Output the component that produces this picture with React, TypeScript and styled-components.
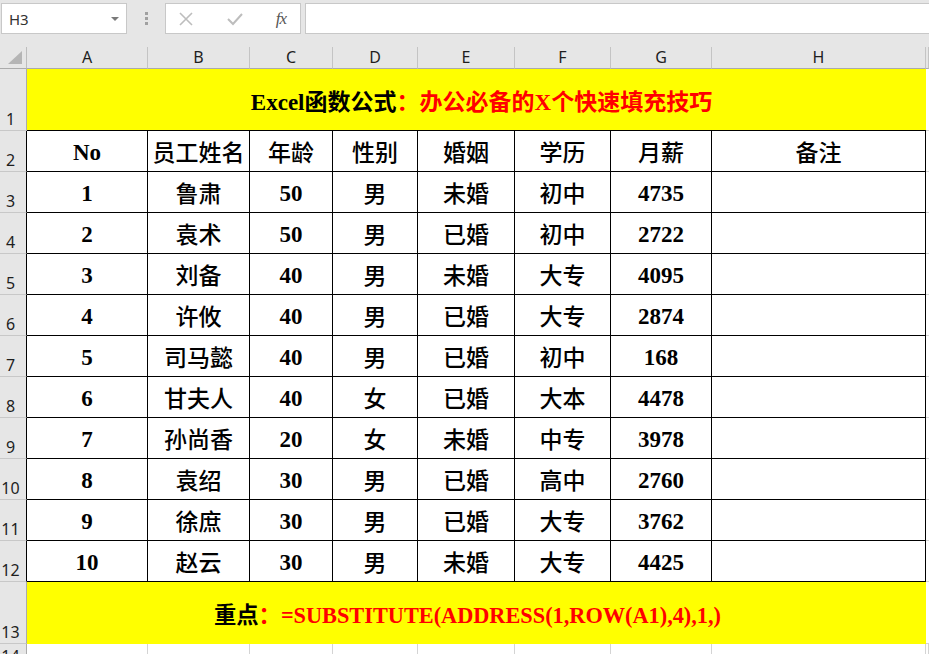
import React from "react";
import styled, { createGlobalStyle } from "styled-components";

const Global = createGlobalStyle`
  html, body { margin: 0; padding: 0; overflow: hidden; background: #ffffff; }
  body { width: 929px; height: 654px; }
  * { box-sizing: border-box; }
`;

const Page = styled.div`
  width: 929px;
  height: 654px;
  display: flex;
  flex-direction: column;
  overflow: hidden;
  background: #e6e6e6;
`;

const Toolbar = styled.div`
  height: 47px;
  flex: none;
  display: flex;
  align-items: flex-start;
  padding: 3px 0 0 1px;
  background: #e6e6e6;
`;

const NameBox = styled.div`
  width: 126px;
  height: 31px;
  background: #ffffff;
  border: 1px solid #c8c8c8;
  display: flex;
  align-items: center;
  justify-content: space-between;
  padding: 0 7px 0 7px;
  font-family: "Noto Sans", "Open Sans", sans-serif;
  font-size: 15px;
  color: #333333;
`;

const Caret = styled.span`
  width: 0;
  height: 0;
  border-left: 4px solid transparent;
  border-right: 4px solid transparent;
  border-top: 4px solid #7a7a7a;
`;

const Grip = styled.div`
  width: 38px;
  height: 31px;
  display: flex;
  flex-direction: column;
  align-items: center;
  justify-content: center;
  gap: 2px;
`;

const GripDot = styled.span`
  width: 3px;
  height: 3px;
  background: #a0a0a0;
`;

const FxBox = styled.div`
  width: 136px;
  height: 31px;
  background: #ffffff;
  border: 1px solid #c8c8c8;
  display: flex;
  align-items: center;
  justify-content: space-between;
  padding: 0 14px 0 12px;
`;

const FxLabel = styled.span`
  font-family: "Liberation Serif", serif;
  font-style: italic;
  font-size: 17px;
  color: #555555;
  letter-spacing: -1px;
`;

const FormulaInput = styled.div`
  flex: 1;
  height: 31px;
  margin-left: 4px;
  margin-right: -4px;
  background: #ffffff;
  border: 1px solid #c8c8c8;
`;

const Sheet = styled.div`
  flex: 1;
  display: grid;
  grid-template-columns: 27px 121px 102px 83px 85px 97px 96px 101px 214px 1fr;
  grid-template-rows: 22px 62px repeat(11, 41px) 62px 24px;
  background: #ffffff;
`;

const Corner = styled.div`
  background: #e6e6e6;
  border-right: 1px solid #bdbdbd;
  border-bottom: 1px solid #ababab;
  position: relative;
  &::after {
    content: "";
    position: absolute;
    right: 4px;
    bottom: 4px;
    width: 0;
    height: 0;
    border-left: 14px solid transparent;
    border-bottom: 13px solid #b5b5b5;
  }
`;

const ColHead = styled.div`
  background: #e6e6e6;
  border-right: 1px solid #c4c4c4;
  border-bottom: 1px solid #ababab;
  display: flex;
  align-items: flex-end;
  justify-content: center;
  padding-bottom: 1px;
  font-family: "Noto Sans", "Open Sans", sans-serif;
  font-size: 16px;
  line-height: 20px;
  color: #1e1e1e;
`;

const RowHead = styled.div<{ $dark?: boolean }>`
  background: #e6e6e6;
  border-right: 1px solid ${(p) => (p.$dark ? "#000000" : "#ababab")};
  border-bottom: 1px solid #c8c8c8;
  display: flex;
  align-items: flex-end;
  justify-content: center;
  padding-right: 5px;
  padding-bottom: 1px;
  font-family: "Noto Sans", "Open Sans", sans-serif;
  font-size: 16px;
  line-height: 20px;
  color: #1e1e1e;
`;

const Banner = styled.div<{ $bottomRule?: boolean; $size: number }>`
  grid-column: 2 / span 8;
  background: #ffff00;
  border-bottom: ${(p) => (p.$bottomRule ? "1px solid #000000" : "none")};
  display: flex;
  align-items: center;
  justify-content: center;
  padding-left: ${(p) => (p.$bottomRule ? "10px" : "0")};
  padding-right: ${(p) => (p.$bottomRule ? "0" : "18px")};
  font-family: "Liberation Serif", "Noto Sans CJK SC", serif;
  font-weight: 700;
  font-size: ${(p) => p.$size}px;
  white-space: nowrap;
`;

const Ink = styled.span<{ $red?: boolean }>`
  color: ${(p) => (p.$red ? "#ff0000" : "#000000")};
`;

const Cell = styled.div<{ $cjk?: boolean }>`
  background: #ffffff;
  border-right: 1px solid #000000;
  border-bottom: 1px solid #000000;
  display: flex;
  align-items: center;
  justify-content: center;
  padding-top: ${(p) => (p.$cjk ? "0" : "3px")};
  font-family: ${(p) =>
    p.$cjk ? '"Noto Sans CJK SC", serif' : '"Liberation Serif", "Noto Sans CJK SC", serif'};
  font-weight: ${(p) => (p.$cjk ? 500 : 700)};
  font-size: 23px;
  color: #000000;
  white-space: nowrap;
`;

const Filler = styled.div`
  background: #ffffff;
  border-bottom: 1px solid #d4d4d4;
`;

const BlankCell = styled.div`
  background: #ffffff;
  border-right: 1px solid #d4d4d4;
`;

const CrossIcon = () => (
  <svg width="16" height="16" viewBox="0 0 16 16">
    <path d="M2 2 L14 14 M14 2 L2 14" stroke="#bdbdbd" strokeWidth="1.6" fill="none" />
  </svg>
);

const CheckIcon = () => (
  <svg width="18" height="16" viewBox="0 0 18 16">
    <path d="M2 8 L7 13 L16 3" stroke="#bdbdbd" strokeWidth="2" fill="none" />
  </svg>
);

const cols = ["A", "B", "C", "D", "E", "F", "G", "H"];
const header = ["No", "员工姓名", "年龄", "性别", "婚姻", "学历", "月薪", "备注"];
const rows: (string | number)[][] = [
  [1, "鲁肃", 50, "男", "未婚", "初中", 4735],
  [2, "袁术", 50, "男", "已婚", "初中", 2722],
  [3, "刘备", 40, "男", "未婚", "大专", 4095],
  [4, "许攸", 40, "男", "已婚", "大专", 2874],
  [5, "司马懿", 40, "男", "已婚", "初中", 168],
  [6, "甘夫人", 40, "女", "已婚", "大本", 4478],
  [7, "孙尚香", 20, "女", "未婚", "中专", 3978],
  [8, "袁绍", 30, "男", "已婚", "高中", 2760],
  [9, "徐庶", 30, "男", "已婚", "大专", 3762],
  [10, "赵云", 30, "男", "未婚", "大专", 4425],
];

export default function App() {
  return (
    <>
      <Global />
      <Page>
        <Toolbar>
          <NameBox>
            <span>H3</span>
            <Caret />
          </NameBox>
          <Grip>
            <GripDot />
            <GripDot />
            <GripDot />
          </Grip>
          <FxBox>
            <CrossIcon />
            <CheckIcon />
            <FxLabel>fx</FxLabel>
          </FxBox>
          <FormulaInput />
        </Toolbar>
        <Sheet>
          <Corner />
          {cols.map((c) => (
            <ColHead key={c}>{c}</ColHead>
          ))}
          <ColHead />

          <RowHead>1</RowHead>
          <Banner $bottomRule $size={23}>
            <Ink>Excel函数公式</Ink>
            <Ink $red>：办公必备的X个快速填充技巧</Ink>
          </Banner>
          <Filler />

          <RowHead $dark>2</RowHead>
          {header.map((h, i) => (
            <Cell key={h} $cjk={i > 0}>
              {h}
            </Cell>
          ))}
          <Filler />

          {rows.map((r, ri) => (
            <React.Fragment key={ri}>
              <RowHead $dark>{ri + 3}</RowHead>
              {r.map((v, ci) => (
                <Cell key={ci} $cjk={typeof v === "string"}>
                  {v}
                </Cell>
              ))}
              <Cell />
              <Filler />
            </React.Fragment>
          ))}

          <RowHead>13</RowHead>
          <Banner $size={22.3}>
            <Ink>重点</Ink>
            <Ink $red>：=SUBSTITUTE(ADDRESS(1,ROW(A1),4),1,)</Ink>
          </Banner>
          <Filler />

          <RowHead>14</RowHead>
          {cols.map((c) => (
            <BlankCell key={c} />
          ))}
          <BlankCell />
        </Sheet>
      </Page>
    </>
  );
}
